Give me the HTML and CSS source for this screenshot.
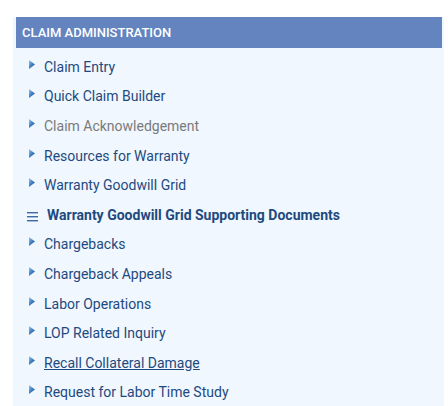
FILE: index.html
```html
<!DOCTYPE html>
<html>
<head>
<meta charset="utf-8">
<link rel="stylesheet" href="styles.css">
</head>
<body>
<svg class="defs" width="0" height="0"><defs><linearGradient id="ag" x1="0" y1="0" x2="1" y2="1"><stop offset="0" stop-color="#9cc8ec"/><stop offset="0.5" stop-color="#3f7fc0"/><stop offset="1" stop-color="#1d4e8a"/></linearGradient></defs></svg>
<div class="panel">
  <div class="panel-header">CLAIM ADMINISTRATION</div>
  <ul class="menu">
    <li class="item"><svg class="arrow" width="6" height="9" viewBox="0 0 6 9"><polygon points="0,0 6,4.5 0,9" fill="url(#ag)"/></svg><a class="link">Claim Entry</a></li>
    <li class="item"><svg class="arrow" width="6" height="9" viewBox="0 0 6 9"><polygon points="0,0 6,4.5 0,9" fill="url(#ag)"/></svg><a class="link">Quick Claim Builder</a></li>
    <li class="item"><svg class="arrow" width="6" height="9" viewBox="0 0 6 9"><polygon points="0,0 6,4.5 0,9" fill="url(#ag)"/></svg><a class="link disabled">Claim Acknowledgement</a></li>
    <li class="item"><svg class="arrow" width="6" height="9" viewBox="0 0 6 9"><polygon points="0,0 6,4.5 0,9" fill="url(#ag)"/></svg><a class="link">Resources for Warranty</a></li>
    <li class="item"><svg class="arrow" width="6" height="9" viewBox="0 0 6 9"><polygon points="0,0 6,4.5 0,9" fill="url(#ag)"/></svg><a class="link">Warranty Goodwill Grid</a></li>
    <li class="item active"><span class="burger"><svg width="11" height="11" viewBox="0 0 11 11"><rect x="0" y="1" width="11" height="1.4" fill="#3d68a6"/><rect x="0" y="5" width="11" height="1.4" fill="#3d68a6"/><rect x="0" y="9" width="11" height="1.4" fill="#3d68a6"/></svg></span><a class="link bold">Warranty Goodwill Grid Supporting Documents</a></li>
    <li class="item"><svg class="arrow" width="6" height="9" viewBox="0 0 6 9"><polygon points="0,0 6,4.5 0,9" fill="url(#ag)"/></svg><a class="link">Chargebacks</a></li>
    <li class="item"><svg class="arrow" width="6" height="9" viewBox="0 0 6 9"><polygon points="0,0 6,4.5 0,9" fill="url(#ag)"/></svg><a class="link">Chargeback Appeals</a></li>
    <li class="item"><svg class="arrow" width="6" height="9" viewBox="0 0 6 9"><polygon points="0,0 6,4.5 0,9" fill="url(#ag)"/></svg><a class="link">Labor Operations</a></li>
    <li class="item"><svg class="arrow" width="6" height="9" viewBox="0 0 6 9"><polygon points="0,0 6,4.5 0,9" fill="url(#ag)"/></svg><a class="link">LOP Related Inquiry</a></li>
    <li class="item"><svg class="arrow" width="6" height="9" viewBox="0 0 6 9"><polygon points="0,0 6,4.5 0,9" fill="url(#ag)"/></svg><a class="link hover">Recall Collateral Damage</a></li>
    <li class="item"><svg class="arrow" width="6" height="9" viewBox="0 0 6 9"><polygon points="0,0 6,4.5 0,9" fill="url(#ag)"/></svg><a class="link">Request for Labor Time Study</a></li>
  </ul>
</div>
</body>
</html>
```
FILE: styles.css
```css
html, body {
  margin: 0;
  padding: 0;
  background: #ffffff;
  overflow: hidden;
}
body {
  padding: 17px 4px 0 13px;
  font-family: Roboto, "Liberation Sans", sans-serif;
}
.defs {
  display: block;
  width: 0;
  height: 0;
}
.panel {
  width: 431px;
  background: #f0f7fe;
  padding: 0 2px 0 3px;
  box-sizing: border-box;
  min-height: 400px;
}
.panel-header {
  height: 31px;
  background: #6384bf;
  color: #ffffff;
  font-size: 13px;
  font-weight: 500;
  line-height: 31px;
  padding-left: 6px;
}
.menu {
  list-style: none;
  margin: 0;
  padding: 4px 0 0 0;
}
.item {
  height: 29.6px;
  display: flex;
  align-items: center;
  padding-left: 13px;
}
.arrow {
  flex: none;
  margin-right: 9px;
  margin-top: -5px;
}
.link {
  font-size: 14px;
  color: #1e4a7e;
  text-decoration: none;
  white-space: nowrap;
}
.disabled {
  color: #7a7a7a;
}
.bold {
  font-weight: bold;
}
.hover {
  text-decoration: underline;
}
.active {
  padding-left: 11px;
}
.burger {
  width: 11px;
  height: 11px;
  display: flex;
  margin-right: 9px;
  margin-top: 3px;
}
```
